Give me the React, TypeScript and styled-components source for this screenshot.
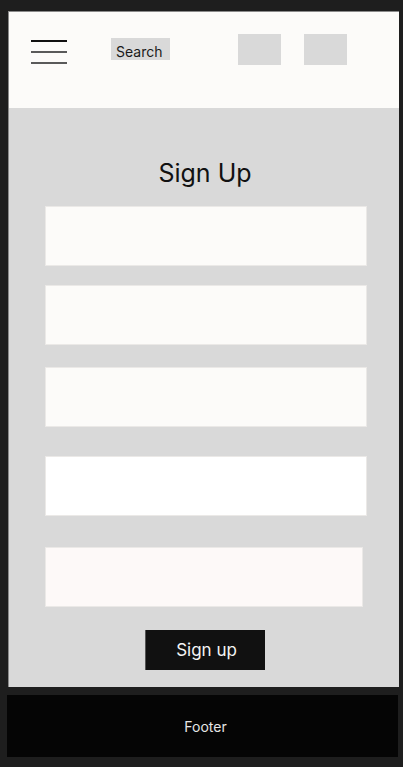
import React from 'react'
import styled, { createGlobalStyle } from 'styled-components'

const GlobalStyle = createGlobalStyle`
  html, body {
    margin: 0;
    padding: 0;
    background: #1e1e1e;
    font-family: Inter, "Noto Sans", sans-serif;
  }
`

const Page = styled.div`
  width: 403px;
  min-height: 767px;
  padding: 11px 0 0 7px;
  box-sizing: border-box;
  display: flex;
  flex-direction: column;
`

const Frame = styled.div`
  width: 391px;
  height: 676px;
  margin-left: 1px;
  box-sizing: border-box;
  border-left: 1px solid #8a8a8a;
  border-top: 1px solid #8a8a8a;
  display: flex;
  flex-direction: column;
  background: #d9d9d9;
`

const Header = styled.header`
  height: 96px;
  background: #fcfbf9;
  display: flex;
  align-items: flex-start;
  padding-top: 21px;
  box-sizing: border-box;
`

const Burger = styled.div`
  width: 36px;
  margin: 7px 0 0 22px;
  display: flex;
  flex-direction: column;
  gap: 9.5px;
`

const BurgerLine = styled.span<{ $dark?: boolean }>`
  display: block;
  height: 1.5px;
  background: ${p => (p.$dark ? '#111' : '#5a5a5a')};
`

const SearchBox = styled.div`
  margin: 4.5px 0 0 44px;
  width: 59px;
  height: 22.5px;
  background: #d9d9d9;
  color: #1a1a1a;
  font-size: 14px;
  line-height: 21px;
  padding: 3px 0 0 5px;
  box-sizing: border-box;
`

const Square = styled.div<{ $gap: number }>`
  width: 43px;
  height: 31px;
  margin: 1px 0 0 ${p => p.$gap}px;
  background: #d9d9d9;
`

const Main = styled.main`
  flex: 1;
  display: flex;
  flex-direction: column;
  align-items: flex-start;
  padding: 50px 0 0 36px;
`

const Title = styled.h1`
  margin: 0;
  width: 320px;
  text-align: center;
  font-weight: 400;
  font-size: 25px;
  line-height: 30px;
  color: #111;
`

const Field = styled.div<{ $top: number; $width?: number; $bg?: string }>`
  margin-top: ${p => p.$top}px;
  width: ${p => p.$width || 322}px;
  height: 60px;
  background: ${p => p.$bg || '#fcfbf9'};
  box-sizing: border-box;
  border: 1px solid #ebe9e7;
`

const Button = styled.button`
  margin: 23px 0 0 100px;
  width: 120px;
  height: 40px;
  border: 0;
  border-left: 1px solid #555;
  background: #111;
  color: #f4f4f4;
  font-family: inherit;
  font-size: 17px;
  padding: 0 0 0 2px;
`

const Footer = styled.footer`
  margin-top: 8px;
  width: 391px;
  height: 62px;
  background: #050505;
  color: #e6e6e6;
  font-size: 14px;
  display: flex;
  align-items: center;
  justify-content: center;
  padding-left: 6px;
  box-sizing: border-box;
`

const fields = [
  { top: 18 },
  { top: 19 },
  { top: 22 },
  { top: 29, bg: '#ffffff' },
  { top: 31, width: 318, bg: '#fdf9f8' },
]

const App = () => {
  return (
    <>
      <GlobalStyle />
      <Page>
        <Frame>
          <Header>
            <Burger>
              <BurgerLine $dark />
              <BurgerLine />
              <BurgerLine />
            </Burger>
            <SearchBox>Search</SearchBox>
            <Square $gap={68} />
            <Square $gap={23} />
          </Header>
          <Main>
            <Title>Sign Up</Title>
            {fields.map((f, i) => (
              <Field key={i} $top={f.top} $width={f.width} $bg={f.bg} />
            ))}
            <Button>Sign up</Button>
          </Main>
        </Frame>
        <Footer>Footer</Footer>
      </Page>
    </>
  )
}

export default App
